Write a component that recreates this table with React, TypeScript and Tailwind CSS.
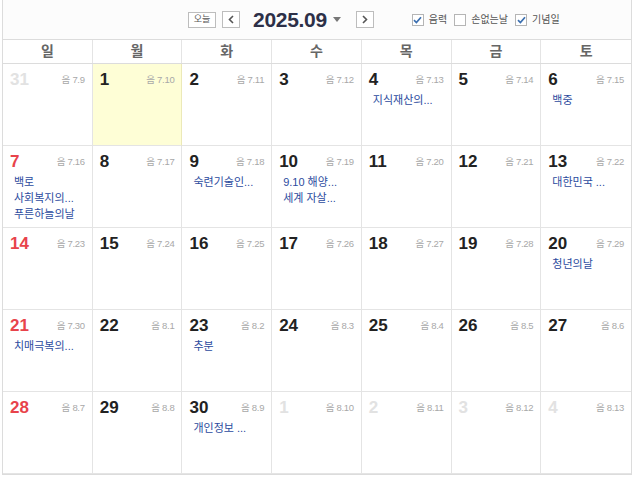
import React from "react";

type Day = {
  d: number;
  lunar: string;
  other?: boolean;
  today?: boolean;
  events?: string[];
};

const weekdays = ["일", "월", "화", "수", "목", "금", "토"];

const weeks: Day[][] = [
  [
    { d: 31, lunar: "음 7.9", other: true },
    { d: 1, lunar: "음 7.10", today: true },
    { d: 2, lunar: "음 7.11" },
    { d: 3, lunar: "음 7.12" },
    { d: 4, lunar: "음 7.13", events: ["지식재산의..."] },
    { d: 5, lunar: "음 7.14" },
    { d: 6, lunar: "음 7.15", events: ["백중"] },
  ],
  [
    { d: 7, lunar: "음 7.16", events: ["백로", "사회복지의...", "푸른하늘의날"] },
    { d: 8, lunar: "음 7.17" },
    { d: 9, lunar: "음 7.18", events: ["숙련기술인..."] },
    { d: 10, lunar: "음 7.19", events: ["9.10 해양...", "세계 자살..."] },
    { d: 11, lunar: "음 7.20" },
    { d: 12, lunar: "음 7.21" },
    { d: 13, lunar: "음 7.22", events: ["대한민국 ..."] },
  ],
  [
    { d: 14, lunar: "음 7.23" },
    { d: 15, lunar: "음 7.24" },
    { d: 16, lunar: "음 7.25" },
    { d: 17, lunar: "음 7.26" },
    { d: 18, lunar: "음 7.27" },
    { d: 19, lunar: "음 7.28" },
    { d: 20, lunar: "음 7.29", events: ["청년의날"] },
  ],
  [
    { d: 21, lunar: "음 7.30", events: ["치매극복의..."] },
    { d: 22, lunar: "음 8.1" },
    { d: 23, lunar: "음 8.2", events: ["추분"] },
    { d: 24, lunar: "음 8.3" },
    { d: 25, lunar: "음 8.4" },
    { d: 26, lunar: "음 8.5" },
    { d: 27, lunar: "음 8.6" },
  ],
  [
    { d: 28, lunar: "음 8.7" },
    { d: 29, lunar: "음 8.8" },
    { d: 30, lunar: "음 8.9", events: ["개인정보 ..."] },
    { d: 1, lunar: "음 8.10", other: true },
    { d: 2, lunar: "음 8.11", other: true },
    { d: 3, lunar: "음 8.12", other: true },
    { d: 4, lunar: "음 8.13", other: true },
  ],
];

function Check({ checked, label }: { checked: boolean; label: string }) {
  return (
    <label className="flex items-center gap-[5px]">
      <span className="flex h-[12px] w-[12px] items-center justify-center border border-[#b5b5b5] bg-white">
        {checked && (
          <svg width="9" height="8" viewBox="0 0 9 8">
            <path d="M1 4.2 L3.4 6.5 L8 1.2" fill="none" stroke="#3b6fb0" strokeWidth="1.7" />
          </svg>
        )}
      </span>
      <span className="text-[10px] text-[#555]">{label}</span>
    </label>
  );
}

function Cell({ day, col }: { day: Day; col: number }) {
  let num = "text-[#222]";
  if (day.other) num = "text-[#e2e2e2]";
  else if (col === 0) num = "text-[#e8434b]";
  return (
    <div
      className={`h-[82px] border-b border-[#e4e4e4] px-[7px] pt-[6px] ${
        col < 6 ? "border-r" : ""
      } ${day.today ? "bg-[#fefed6] border-r-[#ece9b8]" : "bg-white"}`}
    >
      <div className="flex items-start justify-between">
        <span className={`text-[17px] font-bold leading-[20px] ${num}`}>{day.d}</span>
        <span className="pt-[3px] text-[9.5px] tracking-[-0.3px] text-[#a8a8a8]">{day.lunar}</span>
      </div>
      {day.events && (
        <div className="mt-[2px] pl-[4px] text-[11px] leading-[16px] text-[#2c4b9e]">
          {day.events.map((e) => (
            <div key={e}>{e}</div>
          ))}
        </div>
      )}
    </div>
  );
}

export default function App() {
  return (
    <div
      className="h-[477px] w-[634px] bg-white"
      style={{ fontFamily: '"Liberation Sans", "Noto Sans CJK KR", sans-serif' }}
    >
      <div className="ml-[2px] w-[630px] border-x border-b border-[#dcdcdc]">
        <div className="flex h-[39px] items-center bg-[#fcfcfc] pl-[185px]">
          <button className="flex h-[16px] w-[28px] items-center justify-center border border-[#bdbdbd] bg-white text-[9px] text-[#555]">
            오늘
          </button>
          <button className="ml-[6px] flex h-[17px] w-[18px] items-center justify-center border border-[#bdbdbd] bg-white">
            <svg width="6" height="9" viewBox="0 0 6 9">
              <path d="M5 1 L1.5 4.5 L5 8" fill="none" stroke="#555" strokeWidth="1.6" />
            </svg>
          </button>
          <span className="ml-[13px] text-[21px] font-extrabold leading-none tracking-[-0.3px] text-[#2d3048]">
            2025.09
          </span>
          <svg className="ml-[6px]" width="8" height="5" viewBox="0 0 8 5">
            <path d="M0 0 H8 L4 5 Z" fill="#777" />
          </svg>
          <button className="ml-[15px] flex h-[17px] w-[18px] items-center justify-center border border-[#bdbdbd] bg-white">
            <svg width="6" height="9" viewBox="0 0 6 9">
              <path d="M1 1 L4.5 4.5 L1 8" fill="none" stroke="#555" strokeWidth="1.6" />
            </svg>
          </button>
          <div className="ml-[38px] flex items-center gap-[7px]">
            <Check checked label="음력" />
            <Check checked={false} label="손없는날" />
            <Check checked label="기념일" />
          </div>
        </div>
        <div className="grid h-[25px] grid-cols-7 border-y border-[#dcdcdc]">
          {weekdays.map((w, i) => (
            <div
              key={w}
              className={`flex items-center justify-center text-[14px] font-bold text-[#666] ${
                i < 6 ? "border-r border-[#e4e4e4]" : ""
              }`}
            >
              {w}
            </div>
          ))}
        </div>
        {weeks.map((week, r) => (
          <div key={r} className="grid grid-cols-7">
            {week.map((day, c) => (
              <Cell key={c} day={day} col={c} />
            ))}
          </div>
        ))}
      </div>
    </div>
  );
}
